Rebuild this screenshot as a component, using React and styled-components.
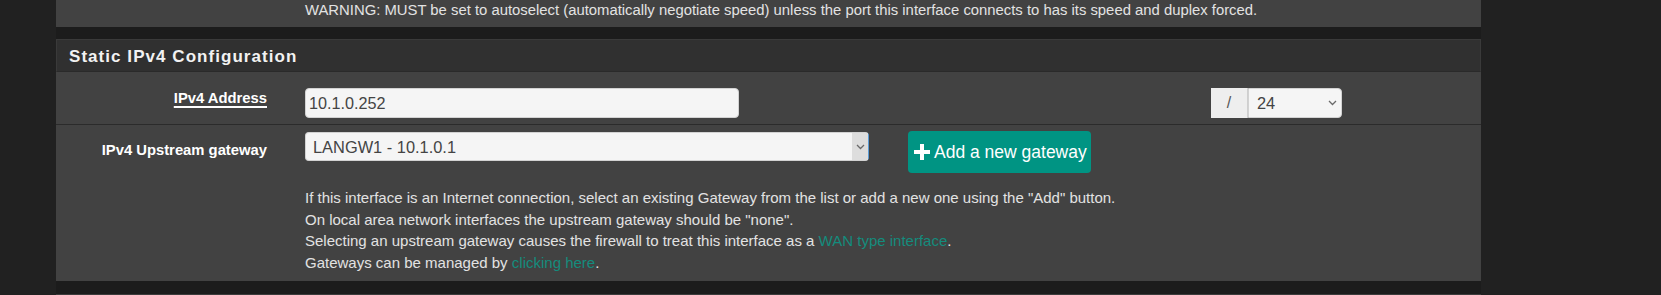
import React from "react";
import styled, { createGlobalStyle } from "styled-components";

const GlobalStyle = createGlobalStyle`
  html, body {
    margin: 0;
    padding: 0;
    background: #212121;
  }
  body {
    font-family: "Liberation Sans", Arial, sans-serif;
  }
  * { box-sizing: border-box; }
`;

const Page = styled.div`
  width: 1661px;
  height: 295px;
  overflow: hidden;
  background: #212121;
  padding-left: 56px;
`;

const Container = styled.div`
  width: 1425px;
  min-height: 295px;
  background: #1c1c1c;
`;

const PrevPanel = styled.div`
  height: 27px;
  background: #424242;
  display: grid;
  grid-template-columns: 211px 1fr;
  column-gap: 38px;
  align-items: end;
  padding-bottom: 8px;
`;

const Panel = styled.section`
  margin-top: 12px;
  background: #424242;
`;

const PanelHeading = styled.h2`
  margin: 0;
  height: 33px;
  padding: 7px 12px 0;
  background: #303030;
  border: 1px solid #3a3a3a;
  border-bottom-color: #2a2a2a;
  color: #f2f2f2;
  font-size: 17px;
  font-weight: 700;
  letter-spacing: 1.05px;
  line-height: 20px;
`;

const FormRow = styled.div`
  display: grid;
  grid-template-columns: 211px 1fr;
  column-gap: 38px;
  border-top: ${(p) => (p.$divider ? "1px solid #2b2b2b" : "none")};
`;

const Label = styled.label`
  text-align: right;
  padding-top: ${(p) => p.$top}px;
  color: #ffffff;
  font-size: 14.8px;
  font-weight: 700;
  line-height: 20px;
`;

const LabelText = styled.span`
  text-decoration: ${(p) => (p.$required ? "underline" : "none")};
  text-decoration-thickness: 2px;
  text-underline-offset: 3px;
`;

const Content = styled.div`
  padding: ${(p) => p.$pad};
`;

const AddressLine = styled.div`
  display: grid;
  grid-template-columns: 434px 1fr 131px;
  padding-right: 139px;
`;

const TextInput = styled.input`
  width: 100%;
  height: 30px;
  margin: 0;
  padding: 0 3px;
  background: #f5f5f5;
  border: 1px solid #d2d2d2;
  border-radius: 4px;
  color: #444;
  font-family: "Liberation Sans", Arial, sans-serif;
  font-size: 16.2px;
  outline: none;
`;

const InputGroup = styled.div`
  grid-column: 3;
  display: flex;
  height: 30px;
`;

const Addon = styled.span`
  width: 37px;
  display: flex;
  align-items: center;
  justify-content: center;
  background: #eeeeee;
  border-right: 1px solid #cfcfcf;
  color: #555;
  font-size: 16px;
`;

const SelectWrap = styled.div`
  position: relative;
  flex: ${(p) => (p.$grow ? "1" : "none")};
  width: ${(p) => (p.$w ? `${p.$w}px` : "auto")};
  height: ${(p) => p.$h}px;
  margin-top: ${(p) => p.$mt || 0}px;
`;

const Select = styled.select`
  appearance: none;
  -webkit-appearance: none;
  width: 100%;
  height: 100%;
  margin: 0;
  padding: 0 20px 0 ${(p) => p.$padLeft}px;
  background: #f5f5f5;
  border: 1px solid #d2d2d2;
  border-right-color: ${(p) => p.$edge || "#d2d2d2"};
  border-radius: ${(p) => p.$radius};
  color: #444;
  font-family: "Liberation Sans", Arial, sans-serif;
  font-size: 16.4px;
  outline: none;
`;

const ArrowBox = styled.span`
  position: absolute;
  top: 1px;
  right: 1px;
  bottom: 1px;
  width: ${(p) => p.$w}px;
  display: flex;
  align-items: center;
  justify-content: center;
  background: ${(p) => p.$bg || "transparent"};
  pointer-events: none;
`;

const GatewayLine = styled.div`
  display: flex;
  align-items: flex-start;
  gap: 39px;
`;

const AddButton = styled.button`
  width: 183px;
  height: 42px;
  display: flex;
  align-items: center;
  gap: 4px;
  padding: 0 0 0 6px;
  border: none;
  border-radius: 4px;
  background: #009483;
  color: #ffffff;
  font-family: "Liberation Sans", Arial, sans-serif;
  font-size: 17.5px;
  white-space: nowrap;
  cursor: pointer;
`;

const HelpBlock = styled.div`
  margin-top: ${(p) => p.$mt || 0}px;
  color: #e2e2e2;
  font-size: ${(p) => p.$size || 15}px;
  line-height: 21.5px;
  white-space: nowrap;
`;

const HelpLine = styled.div``;

const Link = styled.a`
  color: #148c7d;
  text-decoration: none;
`;

const NextPanel = styled.div`
  margin-top: 13px;
  height: 20px;
  background: #303030;
  border-top: 1px solid #3c3c3c;
`;

const Chevron = () => (
  <svg width="9" height="6" viewBox="0 0 9 6" aria-hidden="true">
    <polyline points="1,1 4.5,4.5 8,1" fill="none" stroke="#6a6a6a" strokeWidth="1.3" />
  </svg>
);

const PlusIcon = () => (
  <svg width="16" height="16" viewBox="0 0 16 16" aria-hidden="true">
    <rect x="6" y="0" width="4" height="16" fill="#fff" />
    <rect x="0" y="6" width="16" height="4" fill="#fff" />
  </svg>
);

export default function App() {
  return (
    <>
      <GlobalStyle />
      <Page>
        <Container>
          <PrevPanel>
            <span />
            <HelpBlock $size={14.85}>
              WARNING: MUST be set to autoselect (automatically negotiate speed) unless the port this interface connects to has its speed and duplex forced.
            </HelpBlock>
          </PrevPanel>

          <Panel>
            <PanelHeading>Static IPv4 Configuration</PanelHeading>

            <FormRow>
              <Label $top={16}>
                <LabelText $required>IPv4 Address</LabelText>
              </Label>
              <Content $pad="16px 0 6px 0">
                <AddressLine>
                  <TextInput defaultValue="10.1.0.252" />
                  <InputGroup>
                    <Addon>/</Addon>
                    <SelectWrap $grow $h={30}>
                      <Select $padLeft={8} $radius="0 4px 4px 0" defaultValue="24">
                        <option value="24">24</option>
                      </Select>
                      <ArrowBox $w={18}>
                        <Chevron />
                      </ArrowBox>
                    </SelectWrap>
                  </InputGroup>
                </AddressLine>
              </Content>
            </FormRow>

            <FormRow $divider>
              <Label $top={15}>
                <LabelText>IPv4 Upstream gateway</LabelText>
              </Label>
              <Content $pad="6px 0 8px 0">
                <GatewayLine>
                  <SelectWrap $w={564} $h={29} $mt={1}>
                    <Select $padLeft={7} $radius="4px" $edge="#5b9bd5" defaultValue="lan">
                      <option value="lan">LANGW1 - 10.1.0.1</option>
                    </Select>
                    <ArrowBox $w={16} $bg="#dddddd">
                      <Chevron />
                    </ArrowBox>
                  </SelectWrap>
                  <AddButton type="button">
                    <PlusIcon />
                    Add a new gateway
                  </AddButton>
                </GatewayLine>
                <HelpBlock $mt={14}>
                  <HelpLine>
                    If this interface is an Internet connection, select an existing Gateway from the list or add a new one using the "Add" button.
                  </HelpLine>
                  <HelpLine>
                    On local area network interfaces the upstream gateway should be "none".
                  </HelpLine>
                  <HelpLine>
                    Selecting an upstream gateway causes the firewall to treat this interface as a <Link href="#">WAN type interface</Link>.
                  </HelpLine>
                  <HelpLine>
                    Gateways can be managed by <Link href="#">clicking here</Link>.
                  </HelpLine>
                </HelpBlock>
              </Content>
            </FormRow>
          </Panel>

          <NextPanel />
        </Container>
      </Page>
    </>
  );
}
